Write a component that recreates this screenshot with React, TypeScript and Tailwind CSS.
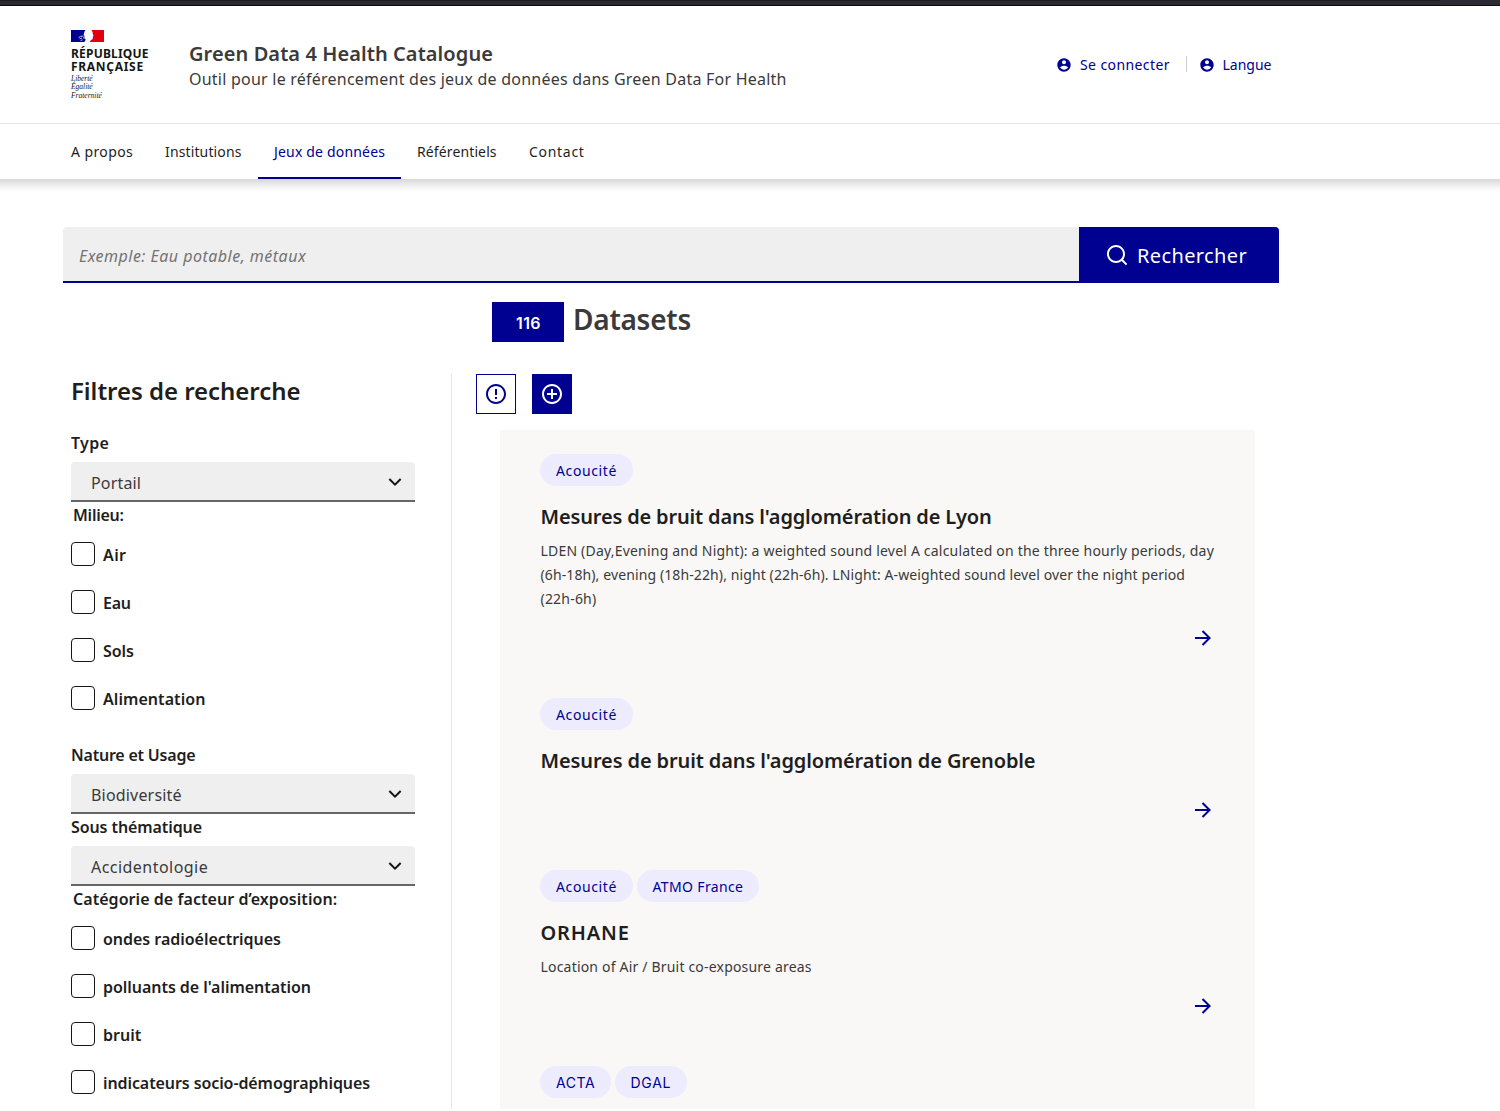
import {
  RiAddCircleLine,
  RiArrowDownSLine,
  RiArrowRightLine,
  RiErrorWarningLine,
  RiSearchLine,
} from "react-icons/ri";

const navItems = [
  { label: "A propos", cls: "ml-[55px] w-[94px] tracking-[0.4px]", active: false },
  { label: "Institutions", cls: "w-[109px] tracking-[0.13px]", active: false },
  { label: "Jeux de données", cls: "w-[143px] tracking-[0.18px]", active: true },
  { label: "Référentiels", cls: "w-[112px] tracking-[0.12px]", active: false },
  { label: "Contact", cls: "w-[88px] tracking-[0.7px]", active: false },
];

const milieux = [
  { label: "Air", cls: "tracking-[0.39px]" },
  { label: "Eau", cls: "tracking-[-0.25px]" },
  { label: "Sols", cls: "tracking-[-0.03px]" },
  { label: "Alimentation", cls: "tracking-[0.06px]" },
];

const facteurs = [
  { label: "ondes radioélectriques", cls: "tracking-[-0.03px]" },
  { label: "polluants de l'alimentation", cls: "tracking-[-0.04px]" },
  { label: "bruit", cls: "tracking-[0px]" },
  { label: "indicateurs socio-démographiques", cls: "tracking-[-0.09px]" },
];

const tagAcoucite = { label: "Acoucité", cls: "w-[93px] tracking-[0.62px]" };

const datasets = [
  {
    tags: [tagAcoucite],
    title: "Mesures de bruit dans l'agglomération de Lyon",
    titleCls: "tracking-[-0.16px]",
    lines: [
      {
        text: "LDEN (Day,Evening and Night): a weighted sound level A calculated on the three hourly periods, day",
        cls: "tracking-[0.2px]",
      },
      {
        text: "(6h-18h), evening (18h-22h), night (22h-6h). LNight: A-weighted sound level over the night period",
        cls: "tracking-[0.11px]",
      },
      { text: "(22h-6h)", cls: "tracking-[0.2px]" },
    ],
  },
  {
    tags: [tagAcoucite],
    title: "Mesures de bruit dans l'agglomération de Grenoble",
    titleCls: "tracking-[-0.12px]",
    lines: [],
  },
  {
    tags: [tagAcoucite, { label: "ATMO France", cls: "w-[122px] tracking-[0.35px]" }],
    title: "ORHANE",
    titleCls: "font-bold tracking-[0.85px]",
    lines: [{ text: "Location of Air / Bruit co-exposure areas", cls: "tracking-[0.19px]" }],
  },
  {
    tags: [
      { label: "ACTA", cls: "w-[71px] font-['Inter'] tracking-[0.6px]" },
      { label: "DGAL", cls: "w-[72px] font-['Inter'] tracking-[0.7px]" },
    ],
    title: "",
    titleCls: "",
    lines: [],
  },
];

function AccountIcon() {
  return (
    <svg viewBox="0 0 24 24" fill="currentColor" className="mt-[3.5px] size-4">
      <path d="M12 2C17.52 2 22 6.48 22 12S17.52 22 12 22 2 17.52 2 12 6.48 2 12 2ZM6.023 15.416C7.491 17.606 9.695 19 12.16 19C14.624 19 16.829 17.607 18.296 15.416C16.683 13.909 14.507 13 12.16 13C9.812 13 7.636 13.909 6.023 15.416ZM12 11C13.657 11 15 9.657 15 8C15 6.343 13.657 5 12 5C10.343 5 9 6.343 9 8C9 9.657 10.343 11 12 11Z" />
    </svg>
  );
}

function Logo() {
  return (
    <div className="w-[118px] shrink-0 pt-6">
      <svg width="33" height="12" viewBox="0 0 33 12" className="block">
        <rect width="33" height="12" fill="#fff" />
        <path d="M0 0H14.6C13.6 1 13.2 2 13.1 3.3L12.6 4.6L13.4 5.8L13.3 7.6L14.6 9.2C14.4 10.4 14 11 13.4 12H0Z" fill="#000091" />
        <path d="M20.3 0H33V12H18.6C19.3 11 19.8 10.3 20.8 9.6C22 9.2 22 8.3 21.6 7.4C22.8 6.2 22.5 5 21.7 4C21.8 2.4 21.4 1.2 20.3 0Z" fill="#e1000f" />
        <path d="M7.6 7.6L9.4 6.4L12.6 6M8.6 8.8L11 8M12.4 7.2L13.4 9M9.6 10.6L11.6 9.8" stroke="#d4d4f2" strokeWidth=".9" fill="none" />
      </svg>
      <div className="mt-[5px] text-[12px] leading-[13px] font-bold text-[#161616]">
        <div className="tracking-[0.2px]">RÉPUBLIQUE</div>
        <div className="tracking-[0.7px]">FRANÇAISE</div>
      </div>
      <div className="mt-[2px] font-['Liberation_Serif',serif] text-[7.5px] leading-[8.4px] text-[#161616] italic">
        <div>Liberté</div>
        <div>Égalité</div>
        <div>Fraternité</div>
      </div>
    </div>
  );
}

function Select({ value, cls }: { value: string; cls: string }) {
  return (
    <div className="flex h-10 w-[344px] justify-between rounded-t border-b-2 border-[#666] bg-[#efefef] pr-2 pl-5">
      <span className={`pt-[9px] leading-6 text-[#3a3a3a] ${cls}`}>{value}</span>
      <RiArrowDownSLine className="mt-2 size-6 text-[#161616]" />
    </div>
  );
}

function Checks({ items }: { items: { label: string; cls: string }[] }) {
  return (
    <div className="flex flex-col gap-6">
      {items.map((item) => (
        <div key={item.label} className="flex h-6 gap-2">
          <span className="size-6 rounded border border-[#161616]" />
          <span className={`pt-px leading-6 font-semibold ${item.cls}`}>{item.label}</span>
        </div>
      ))}
    </div>
  );
}

export default function App() {
  return (
    <div className="h-[1111px] w-[1500px] overflow-hidden bg-white font-['Noto_Sans',sans-serif] text-[16px] whitespace-nowrap text-[#1e1e1e]">
      <div className="relative h-[6px] border-b border-[#0d0c12] bg-[#2b2a33]">
        <div className="h-px w-[1440px] bg-[#1c1b22]" />
      </div>

      <header className="shadow-[0_-8px_10px_12px_rgba(0,0,18,0.2)]">
        <div className="flex h-[118px] border-b border-[#e5e5e5] pl-[71px]">
          <Logo />
          <div className="w-[867px] pt-[34px] text-[#3a3a3a]">
            <div className="text-[20px] leading-7 font-semibold tracking-[0.08px]">Green Data 4 Health Catalogue</div>
            <div className="-mt-px leading-6 tracking-[0.23px]">
              Outil pour le référencement des jeux de données dans Green Data For Health
            </div>
          </div>
          <div className="flex h-6 pt-[47px] text-[14px] leading-6 text-[#000091]">
            <div className="flex w-[130px] gap-2">
              <AccountIcon />
              <span className="tracking-[0.4px]">Se connecter</span>
            </div>
            <div className="mt-[3px] h-4 w-px bg-[#ccc]" />
            <div className="ml-[12px] flex gap-[7.5px]">
              <AccountIcon />
              <span>Langue</span>
            </div>
          </div>
        </div>
        <nav className="flex h-[55px] text-[14px] leading-6">
          {navItems.map((item) => (
            <a
              key={item.label}
              className={`pt-4 pl-4 ${item.cls} ${item.active ? "border-b-2 border-[#000091] text-[#000091]" : ""}`}
            >
              {item.label}
            </a>
          ))}
        </nav>
      </header>

      <div className="mt-12 ml-[63px] flex h-14 w-[1216px]">
        <div className="flex-1 rounded-tl border-b-2 border-[#000091] bg-[#efefef] pt-[17px] pl-4 leading-6 tracking-[0.48px] text-[#737373] italic">
          Exemple: Eau potable, métaux
        </div>
        <button className="flex w-[200px] rounded-tr bg-[#000091] pt-4 pl-[26px] text-white">
          <RiSearchLine className="size-6" />
          <span className="-mt-px ml-[8px] text-[20px] leading-7 tracking-[0.38px]">Rechercher</span>
        </button>
      </div>

      <div className="mt-[19px] ml-[492px] flex h-10">
        <span className="w-[72px] bg-[#000091] pt-[9px] pl-px text-center font-['Inter'] leading-6 font-semibold tracking-[0.4px] text-white">
          116
        </span>
        <h1 className="-mt-px ml-[9px] text-[28px] leading-9 font-semibold tracking-[-0.25px] text-[#3a3a3a]">
          Datasets
        </h1>
      </div>

      <div className="mt-8 ml-[71px] flex h-[735px] overflow-hidden">
        <aside className="w-[381px] shrink-0 border-r border-[#e5e5e5]">
          <h2 className="pt-px text-[24px] leading-8 font-semibold tracking-[-0.04px]">Filtres de recherche</h2>
          <div className="mt-6 mb-[7px] leading-6 font-semibold tracking-[0.3px]">Type</div>
          <Select value="Portail" cls="tracking-[0.17px]" />
          <div className="mt-px mb-[15px] pl-0.5 leading-6 font-semibold tracking-[-0.24px]">Milieu:</div>
          <Checks items={milieux} />
          <div className="mt-[33px] mb-[7px] leading-6 font-semibold tracking-[-0.21px]">Nature et Usage</div>
          <Select value="Biodiversité" cls="tracking-[0.18px]" />
          <div className="mt-px mb-[7px] leading-6 font-semibold tracking-[-0.09px]">Sous thématique</div>
          <Select value="Accidentologie" cls="tracking-[0.46px]" />
          <div className="mt-px mb-[15px] pl-0.5 leading-6 font-semibold tracking-[0.05px]">
            Catégorie de facteur d’exposition:
          </div>
          <Checks items={facteurs} />
        </aside>

        <main className="pl-6">
          <div className="flex gap-4">
            <button className="flex size-10 items-center justify-center border border-[#000091] text-[#000091]">
              <RiErrorWarningLine className="size-6" />
            </button>
            <button className="flex size-10 items-center justify-center bg-[#000091] text-white">
              <RiAddCircleLine className="size-6" />
            </button>
          </div>
          <div className="mt-4 ml-6 w-[755px] bg-[#f9f8f6]">
            {datasets.map((d, i) => (
              <article key={i} className="px-10 pt-6">
                <div className="flex gap-[3.5px]">
                  {d.tags.map((t) => (
                    <span
                      key={t.label}
                      className={`h-8 rounded-full bg-[#ececfe] pt-[5px] pl-4 text-[14px] leading-6 text-[#000091] ${t.cls}`}
                    >
                      {t.label}
                    </span>
                  ))}
                </div>
                <h3 className={`mt-[17px] h-7 pl-[0.5px] text-[20px] leading-7 font-semibold ${d.titleCls}`}>
                  {d.title}
                </h3>
                <div className="pt-2 pl-[0.5px] text-[14px] leading-6 text-[#3a3a3a]">
                  {d.lines.map((l) => (
                    <div key={l.text} className={l.cls}>
                      {l.text}
                    </div>
                  ))}
                </div>
                <RiArrowRightLine className="mt-[15px] mb-6 ml-[651px] size-6 text-[#000091]" />
              </article>
            ))}
          </div>
        </main>
      </div>
    </div>
  );
}
